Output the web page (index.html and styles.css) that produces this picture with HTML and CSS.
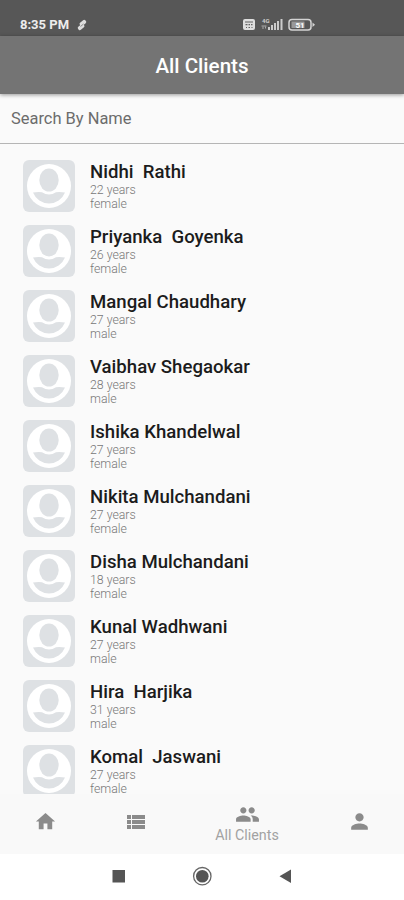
FILE: index.html
```
<!DOCTYPE html>
<html lang="en">
<head>
<meta charset="utf-8">
<title>All Clients</title>
<link rel="stylesheet" href="styles.css">
</head>
<body>
<svg class="defs" width="0" height="0" aria-hidden="true">
  <symbol id="avatar" viewBox="0 0 52 52">
    <rect width="52" height="52" rx="6" fill="#dee1e4"/>
    <circle cx="26" cy="26" r="22" fill="#fff"/>
    <ellipse cx="26" cy="20" rx="9.7" ry="11.500" fill="#dee1e4"/>
    <path d="M10 32.500Q15 31.600 19 32.200Q26 37 33 32.200Q37 31.600 42 32.500A17.200 17.200 0 0 1 10 32.500Z" fill="#dee1e4"/>
  </symbol>
</svg>
<div class="phone">
  <div class="status">
    <span class="time">8:35 PM</span>
    <svg class="pill" width="12" height="12" viewBox="0 0 12 12"><g transform="rotate(-40 6 6)" fill="#dedede"><rect x="0.500" y="5" width="7" height="4" rx="1.500"/><rect x="4.500" y="3" width="7" height="4" rx="1.500"/></g><path d="M4.500 7.500L7.500 5" stroke="#777" stroke-width=".8"/></svg>
    <svg class="signals" width="74" height="14" viewBox="0 0 74 14">
      <rect x="1" y="1" width="12" height="11" rx="2" fill="#dedede"/>
      <path d="M3 4h8M3.500 6.700h2M6.500 6.700h1.500M9 6.700h1.500M4 9.500h1M6.500 9.500h1.500M9.500 9.500h1" stroke="#626262" stroke-width="1.200"/>
      <text x="20" y="5" class="tiny">4G</text>
      <path d="M19.500 8h5M21 8.500v2.500M23.500 8.500v2" stroke="#aaa" stroke-width="1"/>
      <path d="M27 12v-3M30 12v-5M33 12v-7M36 12v-9M39.500 12v-11" stroke="#ccc" stroke-width="2"/>
      <rect x="47" y="1.500" width="22" height="10.500" rx="3" fill="none" stroke="#d4d4d4" stroke-width="1.500"/>
      <path d="M70.500 4.500l2.500 2.200-2.500 2.200z" fill="#d4d4d4"/>
      <rect x="49.500" y="3.500" width="13" height="6.500" fill="#999"/>
      <text x="58" y="9.800" class="charge">51</text>
    </svg>
  </div>
  <header class="bar">All Clients</header>
  <div class="search">Search By Name</div>
  <main class="list">
    <div class="row"><svg class="avatar"><use href="#avatar"/></svg><div class="info"><b>Nidhi&nbsp; Rathi</b><span>22 years</span><span>female</span></div></div>
    <div class="row"><svg class="avatar"><use href="#avatar"/></svg><div class="info"><b>Priyanka&nbsp; Goyenka</b><span>26 years</span><span>female</span></div></div>
    <div class="row"><svg class="avatar"><use href="#avatar"/></svg><div class="info"><b>Mangal Chaudhary</b><span>27 years</span><span>male</span></div></div>
    <div class="row"><svg class="avatar"><use href="#avatar"/></svg><div class="info"><b>Vaibhav Shegaokar</b><span>28 years</span><span>male</span></div></div>
    <div class="row"><svg class="avatar"><use href="#avatar"/></svg><div class="info"><b>Ishika Khandelwal</b><span>27 years</span><span>female</span></div></div>
    <div class="row"><svg class="avatar"><use href="#avatar"/></svg><div class="info"><b>Nikita Mulchandani</b><span>27 years</span><span>female</span></div></div>
    <div class="row"><svg class="avatar"><use href="#avatar"/></svg><div class="info"><b>Disha Mulchandani</b><span>18 years</span><span>female</span></div></div>
    <div class="row"><svg class="avatar"><use href="#avatar"/></svg><div class="info"><b>Kunal Wadhwani</b><span>27 years</span><span>male</span></div></div>
    <div class="row"><svg class="avatar"><use href="#avatar"/></svg><div class="info"><b>Hira&nbsp; Harjika</b><span>31 years</span><span>male</span></div></div>
    <div class="row"><svg class="avatar"><use href="#avatar"/></svg><div class="info"><b>Komal&nbsp; Jaswani</b><span>27 years</span><span>female</span></div></div>
  </main>
  <nav class="tabs">
    <a><svg width="23" height="23" viewBox="0 0 24 24"><path d="M10 20v-6h4v6h5v-8h3L12 3 2 12h3v8z"/></svg></a>
    <a><svg width="24" height="24" viewBox="0 0 24 24"><path d="M3 14h4v-4H3v4zm0 5h4v-4H3v4zM3 9h4V5H3v4zm5 5h13v-4H8v4zm0 5h13v-4H8v4zM8 5v4h13V5H8z"/></svg></a>
    <a class="active"><svg width="25" height="25" viewBox="0 0 24 24"><path d="M16 11c1.660 0 2.990-1.340 2.990-3S17.660 5 16 5s-3 1.340-3 3 1.340 3 3 3zm-8 0c1.660 0 2.990-1.340 2.990-3S9.660 5 8 5 5 6.340 5 8s1.340 3 3 3zm0 2c-2.330 0-7 1.170-7 3.500V19h14v-2.500c0-2.330-4.670-3.500-7-3.500zm8 0c-.29 0-.62.020-.97.050 1.160.84 1.970 1.970 1.970 3.450V19h6v-2.500c0-2.330-4.670-3.500-7-3.500z"/></svg><span>All Clients</span></a>
    <a><svg width="25" height="25" viewBox="0 0 24 24"><path d="M12 12c2.210 0 4-1.790 4-4s-1.790-4-4-4-4 1.790-4 4 1.790 4 4 4zm0 2c-2.670 0-8 1.340-8 4v2h16v-2c0-2.660-5.330-4-8-4z"/></svg></a>
  </nav>
  <div class="system">
    <svg width="20" height="20" viewBox="0 0 20 20"><rect x="4.500" y="4" width="12.500" height="12.500" fill="#555"/></svg>
    <svg width="20" height="20" viewBox="0 0 20 20"><circle cx="10.300" cy="10.200" r="8.700" fill="none" stroke="#666" stroke-width="1.300"/><circle cx="10.300" cy="10.200" r="6.300" fill="#555"/></svg>
    <svg width="20" height="20" viewBox="0 0 20 20"><path d="M3.500 10.200L15 3.500v13.500z" fill="#555"/></svg>
  </div>
</div>
</body>
</html>
```
FILE: styles.css
```
* { box-sizing: border-box; }
body { margin: 0; font-family: Roboto, sans-serif; }
.defs { position: absolute; }
svg { display: block; flex: none; }
.phone { width: 404px; height: 900px; display: flex; flex-direction: column; overflow: hidden; background: #fafafa; }
.status { height: 36px; flex: none; background: #575757; color: #ededed; display: flex; align-items: center; padding: 13px 0 0 20px; }
.time { width: 49px; font-size: 13px; font-weight: 700; line-height: 16px; white-space: nowrap; }
.pill { margin-left: 7px; }
.signals { margin-left: 154px; }
.tiny { font-size: 6px; font-weight: 700; fill: #ccc; }
.charge { font-size: 8px; font-weight: 700; fill: #fff; text-anchor: middle; }
.bar { height: 58px; flex: none; background: #747474; color: #fff; text-align: center; font-size: 20.6px; font-weight: 500; line-height: 60px; box-shadow: 0 1px 4px rgba(0,0,0,.4); }
.search { height: 50px; flex: none; padding: 0 11px; border-bottom: 1px solid #b5b5b5; color: #6c6c6c; font-size: 16.45px; line-height: 49px; }
.list { height: 650px; flex: none; overflow: hidden; padding-top: 16px; }
.row { height: 65px; display: flex; padding-left: 23px; gap: 15px; }
.avatar { width: 52px; height: 52px; }
.info { display: flex; flex-direction: column; padding-top: 1px; color: #777; font-size: 12.3px; font-weight: 300; line-height: 14px; }
.info b { color: #1c1c1c; font-size: 18.6px; font-weight: 500; line-height: 22.4px; white-space: pre; }
.tabs { height: 60px; flex: none; background: #f9f9f9; display: grid; grid-template-columns: 90px 91px 132px 93px; fill: #8b8b8b; }
.tabs a { display: flex; flex-direction: column; align-items: center; justify-content: center; padding-bottom: 5px; }
.tabs .active { justify-content: flex-start; padding: 8px 0 0; color: #a2a2a2; font-size: 14.3px; line-height: 17px; }
.system { flex: 1; background: #fff; display: flex; justify-content: center; gap: 64px; padding-top: 12px; }
```
